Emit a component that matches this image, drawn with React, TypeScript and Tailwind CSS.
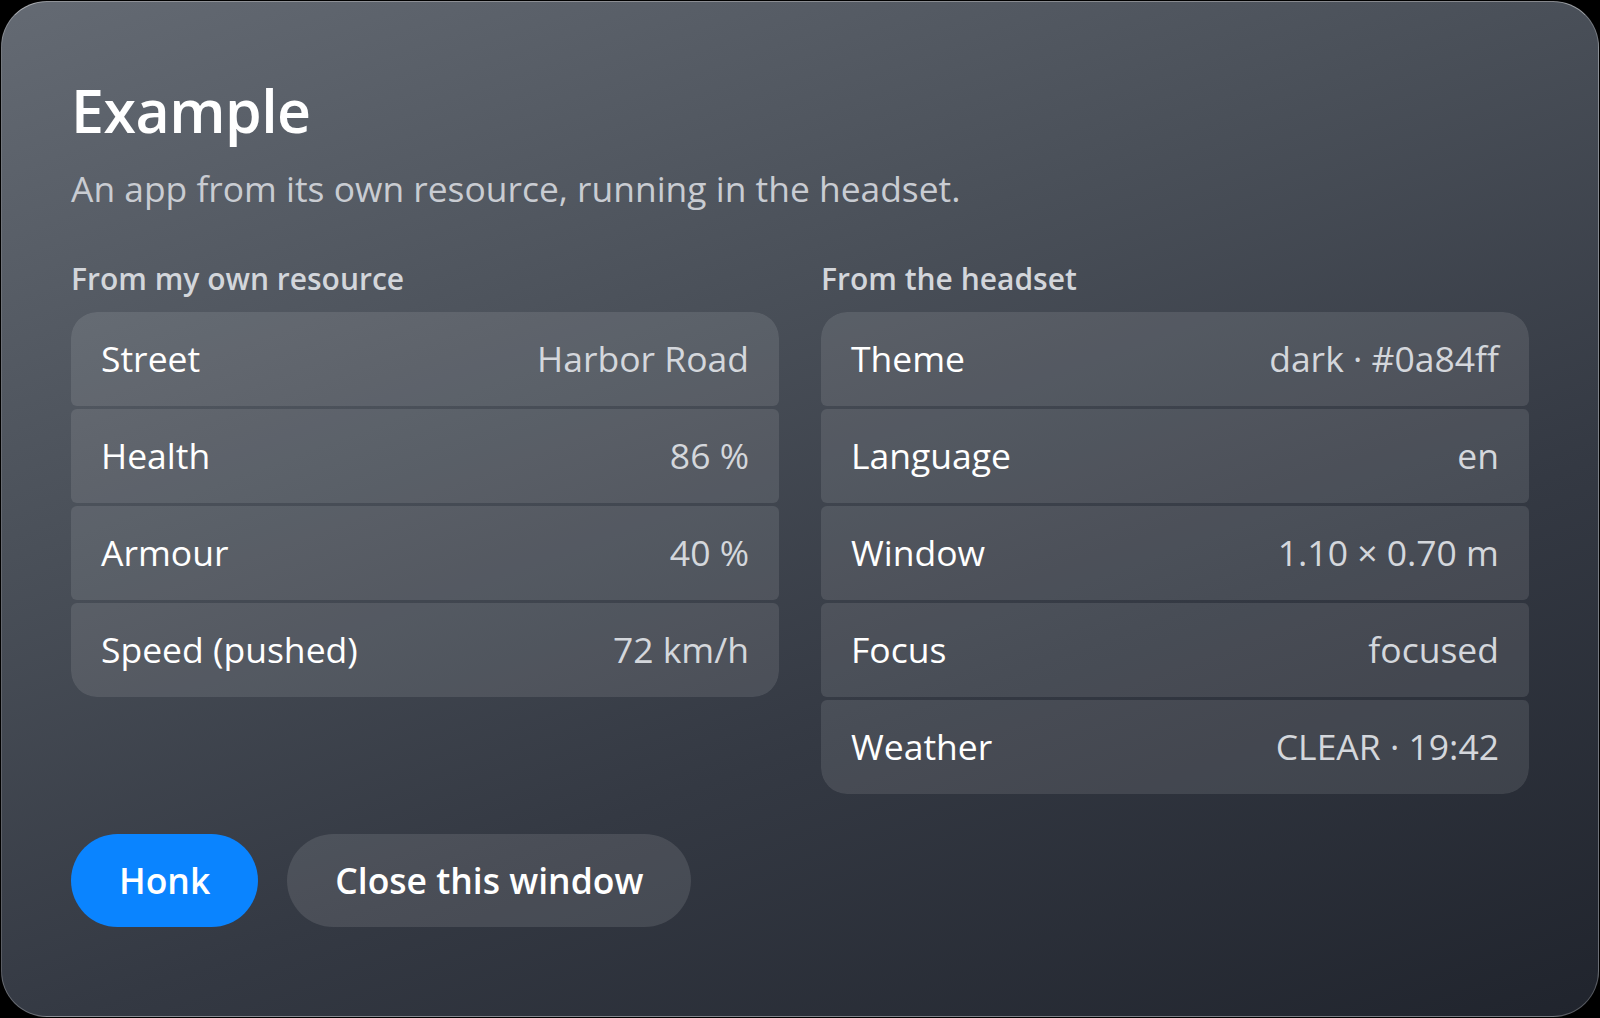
import React from 'react';

type Row = { label: string; value: string };

const ownRows: Row[] = [
  { label: 'Street', value: 'Harbor Road' },
  { label: 'Health', value: '86 %' },
  { label: 'Armour', value: '40 %' },
  { label: 'Speed (pushed)', value: '72 km/h' },
];

const headsetRows: Row[] = [
  { label: 'Theme', value: 'dark · #0a84ff' },
  { label: 'Language', value: 'en' },
  { label: 'Window', value: '1.10 × 0.70 m' },
  { label: 'Focus', value: 'focused' },
  { label: 'Weather', value: 'CLEAR · 19:42' },
];

const Section: React.FC<{ title: string; rows: Row[] }> = ({ title, rows }) => (
  <div className="flex flex-col">
    <h2 className="text-[30px] leading-[36px] font-semibold text-[#d3d6db] mb-[15px]">{title}</h2>
    <div className="flex flex-col gap-[3px] rounded-[26px] overflow-hidden">
      {rows.map((row) => (
        <div
          key={row.label}
          className="h-[94px] flex items-center justify-between px-[30px] bg-white/[0.1] rounded-[6px] first:rounded-t-[26px] last:rounded-b-[26px]"
        >
          <span className="text-[35.5px] text-white">{row.label}</span>
          <span className="text-[35.5px] text-[#d4d7dc]">{row.value}</span>
        </div>
      ))}
    </div>
  </div>
);

export default function App() {
  return (
    <div className="w-[1600px] h-[1018px] bg-black p-px" style={{ fontFamily: '"Open Sans", "Noto Sans", sans-serif' }}>
      <div className="h-full rounded-[46px] border border-white/25 border-t-white/45 bg-[linear-gradient(160deg,#646a73_0%,#4a5059_35%,#343943_65%,#20242d_100%)] px-[69px] pt-[70px] flex flex-col">
        <h1 className="text-[59px] leading-[76px] font-semibold text-white tracking-[-0.5px]">Example</h1>
        <p className="text-[35.4px] leading-[44px] text-[#c9ccd2] mt-[18px]">An app from its own resource, running in the headset.</p>

        <div className="grid grid-cols-2 gap-[42px] mt-[51px]">
          <Section title="From my own resource" rows={ownRows} />
          <Section title="From the headset" rows={headsetRows} />
        </div>

        <div className="flex gap-[29px] mt-[40px]">
          <button className="h-[93px] px-[48px] rounded-full bg-[#0a84ff] text-white text-[35.5px] font-semibold">Honk</button>
          <button className="h-[93px] px-[48px] rounded-full bg-white/[0.11] text-white text-[35.5px] font-semibold">Close this window</button>
        </div>
      </div>
    </div>
  );
}
